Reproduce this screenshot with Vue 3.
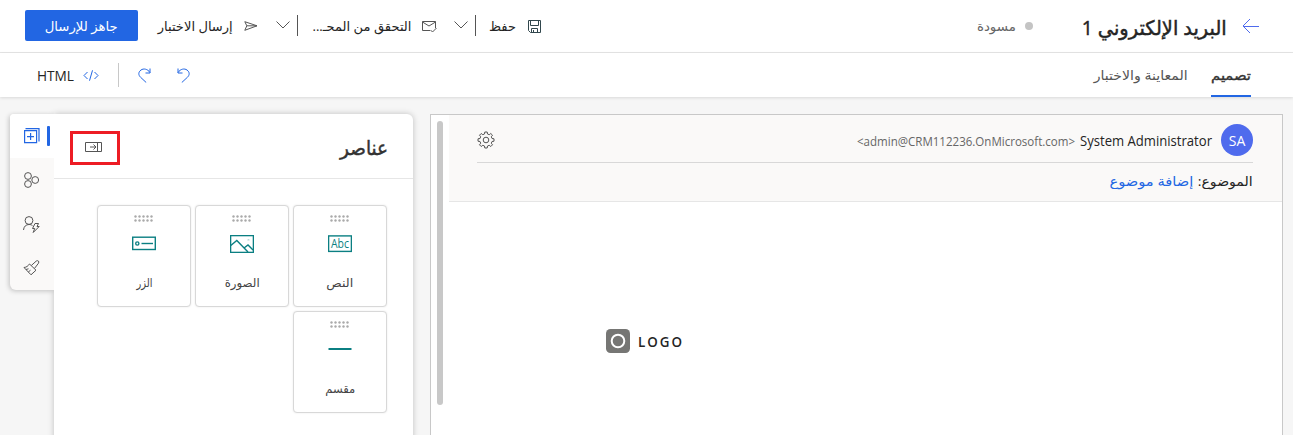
<script setup>
// Keeps a label inside the width reserved for it by condensing or widening its glyphs.
const vFit = {
  mounted(el, { value }) {
    const inner = el.firstElementChild
    inner.style.transform = `scaleX(${value / inner.getBoundingClientRect().width})`
    el.style.width = `${value}px`
  },
}
const cards = [
  { id: 'text', label: 'النص', w: 27 },
  { id: 'image', label: 'الصورة', w: 35 },
  { id: 'button', label: 'الزر', w: 16 },
  { id: 'divider', label: 'مقسم', w: 30 },
]
const dots = [0, 1, 2, 3, 4]
</script>

<template>
  <div class="app" dir="rtl">
    <header class="top">
      <svg class="back" width="17" height="16" viewBox="0 0 17 16"><path d="M8 1 1 8l7 7M1 8.500h16" /></svg>
      <h1 v-fit="145" class="fit title"><span>البريد الإلكتروني 1</span></h1>
      <i class="dot"></i>
      <div v-fit="39" class="fit status"><span>مسودة</span></div>

      <svg class="save" width="13" height="13" viewBox="0 0 13 13"><path d="M.5.5h12v12h-10l-2-2zM2.5.5v5h8v-5M3.5 12.5v-4h6v4M5.5 10v2.5" /></svg>
      <div v-fit="27" class="fit t-save"><span>حفظ</span></div>
      <i class="bar b1"></i>
      <svg class="chev" width="14" height="8" viewBox="0 0 14 8"><path d="m.5.5 6.500 6.500 6.500-6.500" /></svg>
      <svg class="mail" width="15" height="12" viewBox="0 0 15 12"><path d="M8 9.500H.5v-9h13V7M.5 1l6.500 4 6.500-4M8.500 9l2 2 4-4" /></svg>
      <div v-fit="99" class="fit t-check"><span>التحقق من المحـ...</span></div>
      <i class="bar b2"></i>
      <svg class="chev" width="14" height="8" viewBox="0 0 14 8"><path d="m.5.5 6.500 6.500 6.500-6.500" /></svg>
      <svg class="send" width="14" height="10" viewBox="0 0 14 10"><path d="M.8.7 13 4.800.8 9.300l2-4.500zM2.800 4.800H13" /></svg>
      <div v-fit="75" class="fit t-send"><span>إرسال الاختبار</span></div>
      <button class="ready"><div v-fit="73" class="fit"><span>جاهز للإرسال</span></div></button>
    </header>

    <nav class="tabs">
      <div class="tab active"><div v-fit="40" class="fit"><span>تصميم</span></div></div>
      <div class="tab second"><div v-fit="94" class="fit"><span>المعاينة والاختبار</span></div></div>
      <svg class="undo" width="13" height="15" viewBox="0 0 13 15"><path d="M1 .5v4.500h4.500M1 4.500C3.500.8 7.500.2 10 2c3 2.200 2.600 5.200.5 7.200L4.800 14.500" /></svg>
      <svg class="redo" width="13" height="15" viewBox="0 0 13 15"><path d="M12 .5v4.500H7.500M12 4.500C9.500.8 5.500.2 3 2 0 4.200.4 7.200 2.500 9.200l5.700 5.300" /></svg>
      <i class="sep"></i>
      <svg class="code" width="16" height="11" viewBox="0 0 16 11"><path d="M4.500 2 1 5.500 4.500 9M11.500 2 15 5.500 11.500 9M9.500.3l-3 10.400" /></svg>
      <div v-fit="37" class="fit html" dir="ltr"><span>HTML</span></div>
    </nav>

    <main class="body">
      <section class="canvas">
        <div class="mail-col">
          <div class="mail-head">
            <div class="sender">
              <div class="avatar" dir="ltr">SA</div>
              <div v-fit="132" class="fit name" dir="ltr"><span>System Administrator</span></div>
              <div v-fit="218" class="fit addr" dir="ltr"><span>&lt;admin@CRM112236.OnMicrosoft.com&gt;</span></div>
              <svg class="gear" width="18" height="18" viewBox="-9 -9 18 18">
                <path d="M-1.500-6 -1.200-8H1.200L1.500-6 3.200-5.300 4.800-6.500 6.500-4.800 5.300-3.200 6-1.500 8-1.200V1.200L6 1.500 5.300 3.200 6.500 4.800 4.800 6.500 3.200 5.300 1.500 6 1.200 8H-1.200L-1.500 6-3.200 5.300-4.800 6.500-6.500 4.800-5.300 3.200-6 1.500-8 1.200V-1.200L-6-1.500-5.300-3.200-6.500-4.800-4.800-6.500-3.200-5.300z" />
                <circle r="2.800" />
              </svg>
            </div>
            <div class="subject">
              <div v-fit="55" class="fit"><span>الموضوع:</span></div>
              <div v-fit="84" class="fit link"><span>إضافة موضوع</span></div>
            </div>
          </div>
          <div class="logo" dir="ltr">
            <svg width="24" height="24" viewBox="0 0 24 24"><rect width="24" height="24" rx="4.500" fill="#767674" /><circle cx="12" cy="12" r="6.300" fill="none" stroke="#fff" stroke-width="2" /></svg>
            <div v-fit="46" class="fit logo-text"><span>LOGO</span></div>
          </div>
        </div>
        <div class="scroll"></div>
      </section>

      <section class="panel">
        <div class="panel-head">
          <h2 v-fit="48" class="fit"><span>عناصر</span></h2>
          <div class="mark">
            <svg width="17" height="10" viewBox="0 0 17 10"><path d="M.5.5h16v9H.5zM12.500.5v9M5 5h6M8.500 2.500 11 5 8.500 7.500" /></svg>
          </div>
        </div>
        <div class="grid">
          <div v-for="c in cards" :key="c.id" class="card">
            <svg class="grip" width="19" height="7" viewBox="0 0 19 7">
              <template v-for="d in dots" :key="d">
                <circle :cx="1.500 + d * 4" cy="1.500" r="1.200" /><circle :cx="1.500 + d * 4" cy="5.500" r="1.200" />
              </template>
            </svg>
            <svg class="glyph" width="24" height="18" viewBox="0 0 24 18">
              <template v-if="c.id === 'text'">
                <rect x=".6" y=".9" width="22.800" height="15.500" /><text x="12" y="12.700" text-anchor="middle" textLength="18" lengthAdjust="spacingAndGlyphs">Abc</text>
              </template>
              <template v-else-if="c.id === 'image'">
                <rect x=".6" y=".6" width="22.800" height="16.800" /><path d="m.8 10.500 6-5L18 17M14 13l4-3 5 5" /><circle cx="18.500" cy="5" r=".1" />
              </template>
              <template v-else-if="c.id === 'button'">
                <rect x=".7" y="2.200" width="22.600" height="12.300" /><circle cx="5.300" cy="8.500" r="1.600" /><path d="M9.500 8.500H21" />
              </template>
              <path v-else d="M.5 8h23" stroke-width="2" />
            </svg>
            <div v-fit="c.w" class="fit label"><span>{{ c.label }}</span></div>
          </div>
        </div>
      </section>

      <aside class="rail">
        <div class="tool on">
          <svg width="16" height="16" viewBox="0 0 16 16"><path d="M.6 2.600h12v12H.6zM6.600 5v7M3 8.600h7M1.500.6H15v13" /></svg>
          <i></i>
        </div>
        <div class="tool">
          <svg width="16" height="16" viewBox="0 0 16 16"><circle cx="4" cy="4" r="3.400" /><circle cx="4" cy="12" r="3.400" /><circle cx="11.200" cy="8" r="3.400" /></svg>
        </div>
        <div class="tool">
          <svg width="17" height="17" viewBox="0 0 17 17"><circle cx="6" cy="4.500" r="3.900" /><path d="M.5 14c.3-3.500 2.500-5.500 5.500-5.500 1.500 0 2.500.3 3.500 1.200M12 7.500h3.500l-1.500 3h2.200l-6 6 1.500-4H9.500z" /></svg>
        </div>
        <div class="tool">
          <svg width="17" height="16" viewBox="0 0 17 16"><path d="M6.500 4 13 10.200 8 14.800 1 7.500C3.500 7.300 5 6 6.500 4zM8.300 5.500l5-4.500c1.800-1 3.200.5 2.200 2.200l-4 5.200M3 9.500l2.500-.7M5.300 12l2.200-1.800" /></svg>
        </div>
      </aside>
    </main>
  </div>
</template>

<style>
body { margin: 0; overflow: hidden; }
</style>

<style scoped>
.app { width: 1293px; height: 435px; overflow: hidden; display: flex; flex-direction: column; background: #f6f6f6; color: #242424; font-family: "Segoe UI", "Open Sans", "Noto Sans", "DejaVu Sans", sans-serif; font-size: 13px; }
.app * { box-sizing: border-box; }
svg { display: block; flex: none; fill: none; stroke: #555; stroke-width: 1; }
i { display: block; flex: none; }
h1, h2 { margin: 0; font-weight: 500; -webkit-text-stroke: .45px currentColor; }
.fit { display: flex; flex: none; justify-content: flex-start; white-space: nowrap; line-height: 20px; }
.fit > span { flex: none; transform-origin: right center; }
.fit[dir="ltr"] > span, .logo .fit > span { transform-origin: left center; }

.top { display: flex; align-items: center; height: 53px; padding-right: 34px; border-bottom: 1px solid #e6e6e6; background: #fff; flex: none; }
.back { stroke: #4f6bed; }
.title { margin-right: 15px; padding-top: 3px; font-size: 20px; line-height: 30px; }
.dot { width: 8px; height: 8px; margin-right: 49px; border-radius: 50%; background: #c4c4c4; }
.status { margin-right: 9px; color: #666; }
.save { margin-right: 436px; stroke: #31474d; }
.t-save { margin-right: 12px; }
.bar { width: 1px; height: 21px; margin-bottom: 2px; background: #555; }
.b1 { margin-right: 13px; }
.b2 { margin-right: 14px; }
.chev { margin: 0 7px 2px 0; }
.mail { margin: 1px 17px 0 0; }
.t-check, .t-send { margin-right: 11px; }
.send { margin-right: 18px; }
.ready { display: flex; align-items: center; justify-content: center; width: 113px; height: 31px; margin: 0 20px 1px 0; padding: 0; border: 0; border-radius: 2px; background: #2266e3; color: #fff; font: inherit; }

.tabs { position: relative; display: flex; align-items: center; height: 44px; padding-right: 42px; background: #fff; box-shadow: 0 1px 3px rgba(0, 0, 0, .12); flex: none; }
.tab { display: flex; align-items: center; height: 44px; color: #555; }
.tab.active { border-bottom: 2px solid #2266e3; padding-top: 2px; color: #333; -webkit-text-stroke: .35px currentColor; }
.second { margin-right: 23px; }
.undo, .redo, .code { stroke: #2266e3; }
.undo { margin-right: 904px; }
.redo { margin-right: 26px; }
.sep { width: 1px; height: 24px; margin-right: 19px; background: #c8c8c8; }
.code { margin-right: 19px; }
.html { margin-right: 9px; padding-top: 1px; font-size: 14px; }

.body { display: flex; align-items: flex-start; height: 338px; padding: 17px 10px 0; }
.canvas { display: flex; justify-content: space-between; width: 853px; height: 340px; border: 1px solid #c8c8c8; background: #fff; flex: none; }
.mail-col { width: 833px; }
.scroll { width: 6px; height: 284px; margin: 6px 0 0 6px; border-radius: 3px; background: #c8c8c8; }
.mail-head { height: 87px; padding: 0 29px 0 28px; border-bottom: 1px solid #e6e6e6; background: #faf9f8; }
.sender { display: flex; align-items: center; height: 48px; padding-top: 2px; border-bottom: 1px solid #d8d8d8; }
.avatar { display: flex; align-items: center; justify-content: center; width: 32px; height: 32px; padding-top: 1px; border-radius: 50%; background: #4f6bed; color: #fff; font-size: 14px; }
.name { margin-right: 9px; padding-top: 2px; font-size: 14px; }
.addr { margin-right: 5px; padding-top: 4px; color: #666; font-size: 12px; }
.gear { margin-right: auto; }
.subject { display: flex; gap: 5px; padding-top: 8px; }
.link { color: #2266e3; }
.logo { display: flex; align-items: center; width: 90px; gap: 8px; margin: 127px 586px 0 0; }
.logo-text { padding-top: 1px; font-size: 13.5px; font-weight: 600; letter-spacing: 2px; }
.logo svg { stroke: none; }

.panel { width: 359px; height: 340px; margin-right: 17px; border-radius: 0 6px 0 0; background: #fff; box-shadow: 0 0 6px rgba(0, 0, 0, .22); flex: none; }
.panel-head { display: flex; justify-content: space-between; height: 65px; padding: 17px 25px 0 16px; border-bottom: 1px solid #e6e6e6; }
.panel-head h2 { height: 34px; font-size: 20px; line-height: 34px; color: #333; }
.mark { display: flex; align-items: center; justify-content: center; width: 50px; height: 34px; padding: 0 3px 3px 0; border: 3px solid #ed1c24; }
.grid { display: grid; grid-template-columns: repeat(3, 94px); grid-auto-rows: 102px; gap: 4px; padding: 26px 26px 0 0; }
.card { display: flex; flex-direction: column; align-items: center; padding-top: 8px; border: 1px solid #d8d8d8; border-radius: 4px; box-shadow: 0 0 2px rgba(0, 0, 0, .1); background: #fff; }
.grip { margin: 1px 2px 0 0; fill: #aaa; stroke: none; }
.glyph { margin-top: 13px; stroke: #0b7f82; stroke-width: 1.400; }
.glyph text { fill: #0b7f82; stroke: none; font-size: 12px; font-weight: 500; }
.label { margin-top: 20px; color: #444; font-size: 12px; }

.rail { width: 44px; height: 176px; border-radius: 4px 0 0 6px; background: #faf9f8; box-shadow: -1px 1px 5px rgba(0, 0, 0, .22); overflow: hidden; flex: none; clip-path: inset(-8px 0 -8px -8px); }
.tool { display: flex; align-items: center; height: 44px; padding-right: 14px; }
.on { background: #fff; padding-right: 4px; }
.on svg { margin-right: 7px; stroke: #2266e3; stroke-width: 1.200; }
.on i { order: -1; width: 3px; height: 20px; border-radius: 1px; background: #2266e3; }
</style>
